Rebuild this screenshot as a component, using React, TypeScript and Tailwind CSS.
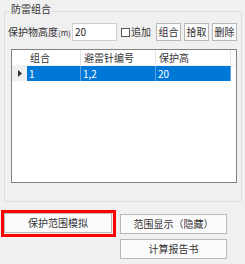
import React from 'react';

const font = { fontFamily: '"Noto Sans CJK SC", "Microsoft YaHei", sans-serif' };

const SmallButton = ({ label }: { label: string }) => (
    <button className="w-[25px] h-[18px] border border-[#b9b9b9] bg-[#fbfbfb] text-[10px] leading-[16px] text-[#333] flex items-center justify-center">
        {label}
    </button>
);

const WideButton = ({ label }: { label: string }) => (
    <button className="w-[107px] h-[20px] border border-[#b9b9b9] bg-[#fbfbfb] text-[10px] leading-[18px] text-[#333] flex items-center justify-center">
        {label}
    </button>
);

const App = () => {
    const columns = [
        { title: '组合', width: 'w-[54px]' },
        { title: '避雷针编号', width: 'w-[75px]' },
        { title: '保护高', width: 'w-[75px]' },
    ];
    const rows = [['1', '1,2', '20']];

    return (
        <div className="w-[245px] h-[264px] bg-[#f0f0f0] text-[#222] overflow-hidden flex flex-col" style={font}>
            {/* 防雷组合 */}
            <div className="relative ml-[4px] mt-[11px] w-[238px] h-[191px] border border-[#dcdcdc] rounded-[3px]">
                <span className="absolute left-[5px] -top-[10px] px-[1px] bg-[#f0f0f0] text-[10px] leading-[14px] text-[#333]">
                    防雷组合
                </span>

                <div className="flex items-center mt-[11px] ml-[3px] h-[18px]">
                    <span className="w-[64px] text-[10px] leading-[14px] text-[#333] whitespace-nowrap">
                        保护物高度<span className="text-[8px]">(m)</span>
                    </span>
                    <div className="w-[45px] h-[18px] border border-[#cfcfcf] bg-white text-[10px] leading-[16px] pl-[2px] text-[#222]">
                        20
                    </div>
                    <div className="w-[39px] flex items-center pl-[4px]">
                        <span className="w-[9px] h-[9px] border border-[#555] bg-white" />
                        <span className="ml-[1px] text-[10px] leading-[14px] text-[#333]">追加</span>
                    </div>
                    <div className="flex gap-[3px]">
                        <SmallButton label="组合" />
                        <SmallButton label="拾取" />
                        <SmallButton label="删除" />
                    </div>
                </div>

                {/* grid */}
                <div className="ml-[6px] mt-[8px] w-[226px] h-[134px] border border-[#828282] bg-white text-[10px]">
                    <div className="flex h-[16px] leading-[16px] border-b border-[#f0f0f0]">
                        <div className="w-[15px]" />
                        {columns.map((c) => (
                            <div key={c.title} className={`${c.width} pl-[3px] border-r border-[#e5e5e5] text-[#333]`}>
                                {c.title}
                            </div>
                        ))}
                        <div className="flex-1 bg-[#fafafa]" />
                    </div>
                    {rows.map((r, i) => (
                        <div key={i} className="flex h-[15px] leading-[15px]">
                            <div className="w-[15px] bg-[#f0f0f0] flex items-center justify-center">
                                <svg width="4" height="7" viewBox="0 0 4 7">
                                    <path d="M0 0 L4 3.5 L0 7 Z" fill="#333" />
                                </svg>
                            </div>
                            {r.map((cell, j) => (
                                <div key={j} className={`${columns[j].width} pl-[2px] bg-[#0078d7] text-white border-r border-[#5aa3e6]`}>
                                    {cell}
                                </div>
                            ))}
                        </div>
                    ))}
                </div>
            </div>

            {/* buttons */}
            <div className="flex mt-[8px]">
                <div className="ml-[1px] w-[115px] h-[27px] border-[3px] border-[#ff0000] flex">
                    <button className="w-[108px] h-[20px] border border-[#b9b9b9] bg-[#fbfbfb] text-[10px] leading-[18px] text-[#333] flex items-center justify-center">
                        保护范围模拟
                    </button>
                </div>
                <div className="ml-[4px] mt-[4px] flex flex-col gap-[5px]">
                    <WideButton label="范围显示（隐藏）" />
                    <WideButton label="计算报告书" />
                </div>
            </div>
        </div>
    );
};

export default App;
